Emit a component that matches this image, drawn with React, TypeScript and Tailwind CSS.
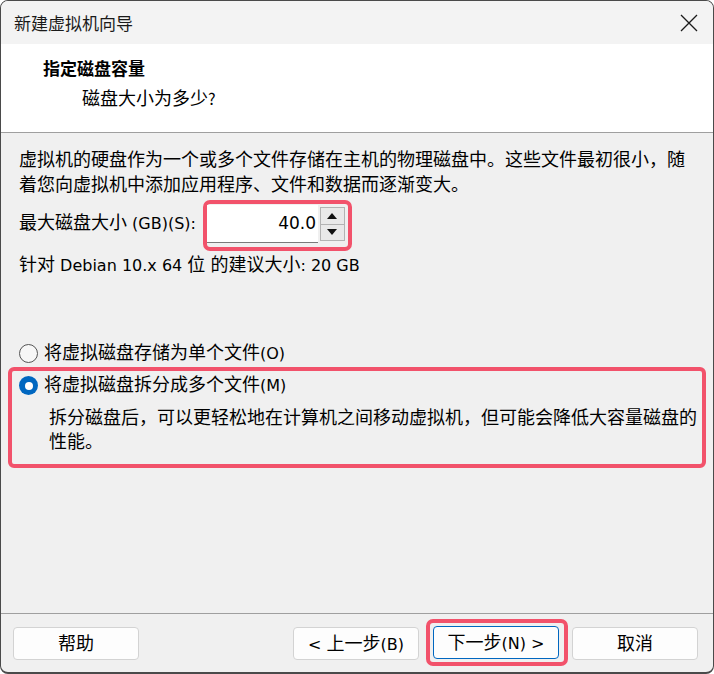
const CJK = /([\u2E80-\u9FFF\u3000-\u303F\uFF00-\uFFEF]+)/;

// mixed text: CJK runs are bigger than the latin ones
function M({ t }: { t: string }) {
  return (
    <>
      {t.split(CJK).map((s, i) =>
        !s ? null : i % 2 === 1 ? (
          <span key={i} className="text-[18px]">
            {s}
          </span>
        ) : (
          <span key={i}>{s}</span>
        )
      )}
    </>
  );
}

function Btn({ label, primary }: { label: string; primary?: boolean }) {
  return (
    <div
      className={
        "w-[126px] h-[33px] flex items-center justify-center rounded-[4px] bg-[#fdfdfd] border " +
        (primary ? "border-[#0067c0]" : "border-[#d3d3d3]")
      }
    >
      <span className="leading-none">
        <M t={label} />
      </span>
    </div>
  );
}

function Spin() {
  return (
    <div className="w-[25px] h-[34px] flex flex-col ml-[2px] mt-[2px]">
      <div className="flex-1 flex items-center justify-center bg-[#e9e9e9] border border-[#b3b3b3]">
        <svg width="10" height="6" viewBox="0 0 10 6">
          <path d="M0 6 L5 0 L10 6 Z" fill="#111" />
        </svg>
      </div>
      <div className="flex-1 flex items-center justify-center bg-[#e9e9e9] border border-t-0 border-[#b3b3b3]">
        <svg width="10" height="6" viewBox="0 0 10 6">
          <path d="M0 0 L5 6 L10 0 Z" fill="#111" />
        </svg>
      </div>
    </div>
  );
}

export default function App() {
  return (
    <div className="w-[714px] h-[674px] bg-white text-[16px] text-black font-['DejaVu_Sans','Noto_Sans_CJK_SC',sans-serif]">
      <div className="h-full flex flex-col overflow-hidden rounded-[8px] border border-b-2 border-[#4a4a4a] bg-[#f0f0f0]">
        {/* title bar */}
        <div className="h-[43px] shrink-0 flex items-center justify-between bg-[#f3f3f3] pl-[13px] pr-[15px]">
          <span className="text-[17px] text-[#1a1a1a] font-['Noto_Sans_CJK_SC',sans-serif]">新建虚拟机向导</span>
          <svg width="18" height="18" viewBox="0 0 18 18">
            <path d="M1 1 L17 17 M17 1 L1 17" stroke="#1a1a1a" strokeWidth="1.3" />
          </svg>
        </div>

        {/* header */}
        <div className="h-[89px] shrink-0 bg-white border-b border-[#9f9f9f] pl-[42px] pt-[10px] font-['Noto_Sans_CJK_SC',sans-serif]">
          <div className="text-[17px] font-bold leading-[28px]">指定磁盘容量</div>
          <div className="pl-[39px] leading-[30px]">
            <M t="磁盘大小为多少?" />
          </div>
        </div>

        {/* body */}
        <div className="flex-1 flex flex-col px-[7px] pt-[15px]">
          <div className="pl-[11px] leading-[24px]">
            <M t="虚拟机的硬盘作为一个或多个文件存储在主机的物理磁盘中。这些文件最初很小，随" />
            <br />
            <M t="着您向虚拟机中添加应用程序、文件和数据而逐渐变大。" />
          </div>

          <div className="flex items-center pl-[11px] mt-[2px]">
            <span className="leading-[24px] mt-[-4px]">
              <M t="最大磁盘大小 (GB)(S):" />
            </span>
            <div className="ml-[7px] flex rounded-[7px] border-[4px] border-[#f2526b] pt-[1px] pr-[3px] pb-[4px]">
              <div className="w-[111px] h-[38px] bg-white border-b border-[#7a7a7a] flex items-center justify-end pr-[2px] text-[17px]">
                40.0
              </div>
              <Spin />
            </div>
          </div>

          <div className="pl-[11px] leading-[24px] mt-[2px]">
            <M t="针对 Debian 10.x 64 位 的建议大小: 20 GB" />
          </div>

          {/* radio 1 */}
          <div className="flex items-center pl-[11px] mt-[63px] leading-[24px]">
            <span className="w-[19px] h-[19px] rounded-full border border-[#555] bg-[#f7f7f7] shrink-0" />
            <span className="ml-[6px]">
              <M t="将虚拟磁盘存储为单个文件(O)" />
            </span>
          </div>

          {/* radio 2, highlighted */}
          <div className="mt-[1px] rounded-[6px] border-[4px] border-[#f2526b] pl-[7px] pt-[2px] pb-[10px]">
            <div className="flex items-center leading-[24px]">
              <span className="w-[19px] h-[19px] rounded-full bg-[#0067c0] shrink-0 flex items-center justify-center">
                <span className="w-[8px] h-[8px] rounded-full bg-white" />
              </span>
              <span className="ml-[6px]">
                <M t="将虚拟磁盘拆分成多个文件(M)" />
              </span>
            </div>
            <div className="pl-[30px] mt-[8px] leading-[23px]">
              <M t="拆分磁盘后，可以更轻松地在计算机之间移动虚拟机，但可能会降低大容量磁盘的" />
              <br />
              <M t="性能。" />
            </div>
          </div>
        </div>

        {/* footer */}
        <div className="h-[59px] shrink-0 border-t border-[#9f9f9f] flex items-start pl-[12px] pr-[15px] pt-[5px]">
          <div className="mt-[8px]">
            <Btn label="帮助" />
          </div>
          <div className="ml-auto mt-[8px]">
            <Btn label="< 上一步(B)" />
          </div>
          <div className="ml-[7px] rounded-[7px] border-[4px] border-[#f2526b] p-[3px] pr-[5px]">
            <Btn label="下一步(N) >" primary />
          </div>
          <div className="ml-[4px] mt-[8px]">
            <Btn label="取消" />
          </div>
        </div>
      </div>
    </div>
  );
}
